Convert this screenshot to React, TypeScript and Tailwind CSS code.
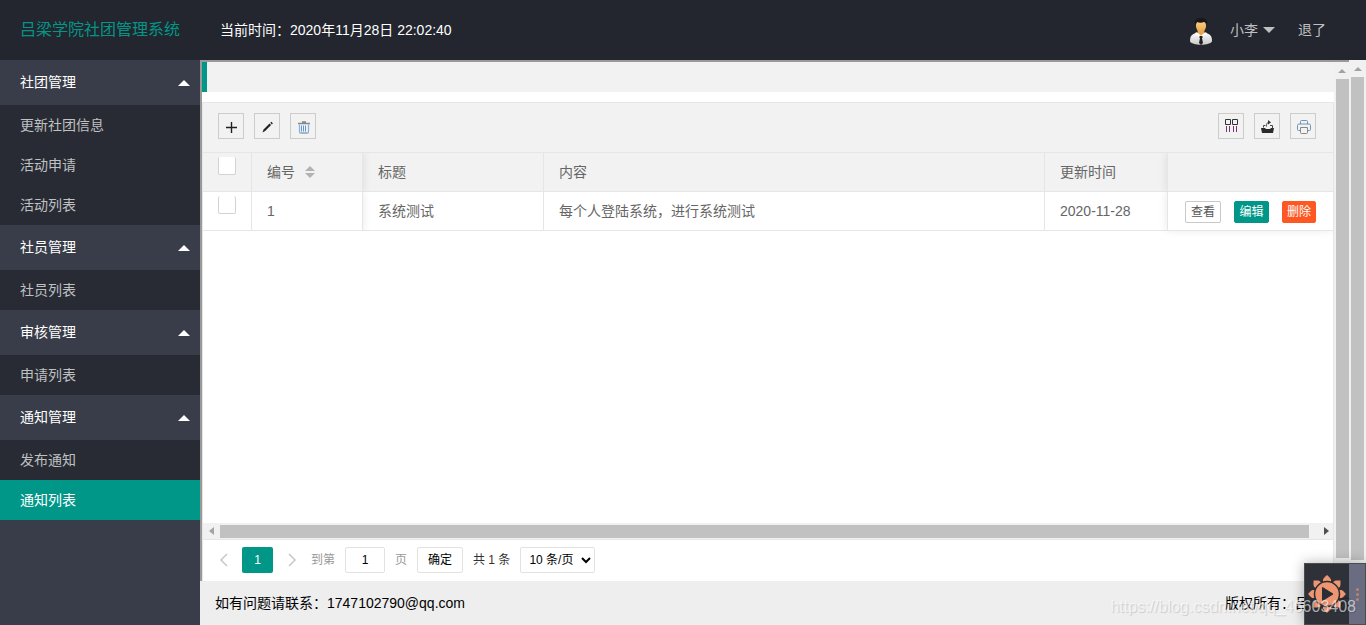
import { useState } from "react";

interface MenuGroup {
  title: string;
  items: string[];
}

interface Notice {
  id: number;
  title: string;
  content: string;
  updated: string;
}

const menus: MenuGroup[] = [
  { title: "社团管理", items: ["更新社团信息", "活动申请", "活动列表"] },
  { title: "社员管理", items: ["社员列表"] },
  { title: "审核管理", items: ["申请列表"] },
  { title: "通知管理", items: ["发布通知", "通知列表"] },
];

const notices: Notice[] = [
  {
    id: 1,
    title: "系统测试",
    content: "每个人登陆系统，进行系统测试",
    updated: "2020-11-28",
  },
];

const toolButton =
  "flex h-[26px] w-[26px] items-center justify-center border border-[#ccc] text-[#333]";
const smallButton = "h-[22px] rounded-xs border px-1 text-xs leading-5";

const Avatar = () => (
  <svg width="24" height="28" viewBox="0 0 24 28" aria-hidden="true">
    <defs>
      <linearGradient id="shirt" x1="0" y1="0" x2="0" y2="1">
        <stop offset="0" stopColor="#fff" />
        <stop offset="1" stopColor="#c9c9c9" />
      </linearGradient>
      <linearGradient id="face" x1="0" y1="0" x2="0" y2="1">
        <stop offset="0" stopColor="#ffd590" />
        <stop offset="1" stopColor="#e8a546" />
      </linearGradient>
    </defs>
    <path d="M1 23c0-5 2-7 6-8l5-1 5 1c4 1 6 3 6 8-1 5-21 5-22 0z" fill="url(#shirt)" />
    <path d="M8 14l4-3 4 3-4 4z" fill="#e9a84c" />
    <path d="M7 14l5 4 5-4 1 2-4 3-2-1-2 1-4-3z" fill="#fff" />
    <path d="M11 18h2l1 1-1 1 1 5-2 2-2-2 1-5-1-1z" fill="#222" />
    <ellipse cx="12" cy="8" rx="5" ry="6.500" fill="url(#face)" />
    <path d="M6 6c-1-4 2-6 6-6s7 2 6 6c-1-1-2-2-3-2-2 1-5 1-7 0-1 0-1 1-2 2z" fill="#1a1714" />
  </svg>
);

const Sidebar = () => {
  const [active, setActive] = useState("通知列表");

  return (
    <nav className="w-[200px] shrink-0 overflow-hidden bg-[#393d49] text-sm">
      {menus.map((group) => (
        <div key={group.title}>
          <button className="flex h-[45px] w-full items-center justify-between pr-[10px] pb-0.5 pl-5 text-white">
            {group.title}
            <span className="mt-0.5 border-x-6 border-b-6 border-x-transparent border-b-white"></span>
          </button>
          <ul className="bg-[#282b33]">
            {group.items.map((item) => (
              <li key={item}>
                <a
                  href="#"
                  onClick={() => setActive(item)}
                  className={`block h-10 pl-5 leading-10 ${
                    item === active ? "bg-[#009688] text-white" : "text-[#bfc0c2]"
                  }`}
                >
                  {item}
                </a>
              </li>
            ))}
          </ul>
        </div>
      ))}
    </nav>
  );
};

const Toolbar = () => (
  <div className="flex h-[49px] items-center justify-between bg-[#f2f2f2] pr-[17px] pb-[3px] pl-[15px]">
    <div className="flex gap-[10px]">
      <button className={toolButton} aria-label="添加">
        <svg width="14" height="14" viewBox="0 0 14 14" className="mt-1 ml-0.5">
          <path d="M6.5 1v11M1 6.500h11" stroke="#222" strokeWidth="1.400" />
        </svg>
      </button>
      <button className={toolButton} aria-label="编辑">
        <svg width="14" height="14" viewBox="0 0 14 14" className="mt-1 ml-0.5">
          <path d="M1.500 11.500l1-3 6-6 1.600 1.600-6 6zM9.300 1.800l1-1 1.600 1.500-1 1.100z" fill="#222" />
        </svg>
      </button>
      <button className={toolButton} aria-label="删除">
        <svg width="14" height="14" viewBox="0 0 14 14" fill="none" className="mt-1 ml-0.5">
          <path d="M1 2.500h12M5 1h4" stroke="#888" strokeWidth="1.400" />
          <path d="M2.500 3.500v7.500q0 1 1 1h7q1 0 1-1V3.500" stroke="#7fb2e0" strokeWidth="1.200" />
          <path d="M4.500 4.500v6M6.500 4.500v6M8.500 4.500v6" stroke="#5a9bd5" />
          <path d="M3.500 12h7" stroke="#999" />
        </svg>
      </button>
    </div>
    <div className="flex gap-[10px]">
      <button className={toolButton} aria-label="筛选列">
        <svg width="14" height="14" viewBox="0 0 14 14" fill="none" className="ml-0.5">
          <path d="M.5.500h5v5h-5zM7.500.500h5v5h-5z" stroke="#333" />
          <path d="M1.500 7v6M4.500 7v6M8.500 7v6M11.500 7v6" stroke="#75356f" />
        </svg>
      </button>
      <button className={toolButton} aria-label="导出">
        <svg width="14" height="14" viewBox="0 0 14 14" className="mt-0.5 ml-0.5">
          <path d="M0 8h4l1 1h4l1-1h3l-1 5H1z" fill="#2b2b2b" />
          <path d="M2.500 7.500V5.500h2M9 5.500h2.500v3M5.500 6.500c0-2.500 0-4 3-4" stroke="#444" fill="none" />
          <path d="M7 0l3 2.500L7 4.500z" fill="#333" />
        </svg>
      </button>
      <button className={toolButton} aria-label="打印">
        <svg width="14" height="14" viewBox="0 0 14 14" fill="none" className="mt-0.5 ml-0.5" stroke="#6f93b5">
          <path d="M3.500 4V1.500q0-1 1-1h5q1 0 1 1V4M3 10.500H1.500Q.5 10.500.5 9.500V5.500Q.5 4 2 4h10q1.500 0 1.500 1.500v4q0 1-1 1H11" />
          <path d="M3.500 7.500h7v5q0 1-1 1h-5q-1 0-1-1z" stroke="#888" />
        </svg>
      </button>
    </div>
  </div>
);

const NoticeTable = () => {
  const th = "h-[39px] border-b border-[#e6e6e6] px-[15px] text-left font-normal";
  const leftFixed = "border-r shadow-[1px_0_8px_rgba(0,0,0,0.08)] [clip-path:inset(0_-10px_0_0)]";

  return (
    <table className="w-full table-fixed border-separate border-spacing-0 text-sm text-[#666]">
      <colgroup>
        <col className="w-[49px]" />
        <col className="w-[111px]" />
        <col className="w-[181px]" />
        <col />
        <col className="w-[122px]" />
        <col className="w-[166px]" />
      </colgroup>
      <thead className="bg-[#f2f2f2]">
        <tr>
          <th className={`${th} border-r align-top`}>
            <input
              type="checkbox"
              aria-label="全选"
              className="mt-1 block h-[18px] w-[18px] appearance-none rounded-xs border border-t-0 border-[#d2d2d2] bg-white"
            />
          </th>
          <th className={`${th} ${leftFixed}`}>
            <div className="flex items-center gap-[10px]">
              编号
              <span className="flex flex-col gap-0.5">
                <i className="border-x-5 border-b-5 border-x-transparent border-b-[#b2b2b2]"></i>
                <i className="border-x-5 border-t-5 border-x-transparent border-t-[#b2b2b2]"></i>
              </span>
            </div>
          </th>
          <th className={`${th} border-r`}>标题</th>
          <th className={`${th} border-r`}>内容</th>
          <th className={th}>更新时间</th>
          <th
            className={`${th} border-l bg-[#f2f2f2] shadow-[-1px_0_8px_rgba(0,0,0,0.08)] [clip-path:inset(0_0_0_-10px)]`}
            aria-label="操作"
          ></th>
        </tr>
      </thead>
      <tbody>
        {notices.map((notice) => (
          <tr key={notice.id}>
            <td className={`${th} border-r align-top`}>
              <input
                type="checkbox"
                aria-label={notice.title}
                className="mt-1 block h-[18px] w-[18px] appearance-none rounded-xs border border-t-0 border-[#d2d2d2] bg-white"
              />
            </td>
            <td className={`${th} ${leftFixed}`}>{notice.id}</td>
            <td className={`${th} border-r`}>{notice.title}</td>
            <td className={`${th} border-r`}>{notice.content}</td>
            <td className={th}>{notice.updated}</td>
            <td className="border-b border-l border-[#e6e6e6] bg-white px-[17px] shadow-[-1px_0_8px_rgba(0,0,0,0.08)] [clip-path:inset(0_0_-10px_-10px)]">
              <div className="mt-0.5 flex justify-between">
                <button className={`${smallButton} w-9 border-[#c9c9c9] bg-white text-[#555]`}>查看</button>
                <button className={`${smallButton} border-[#009688] bg-[#009688] text-white`}>编辑</button>
                <button className={`${smallButton} border-[#ff5722] bg-[#ff5722] text-white`}>删除</button>
              </div>
            </td>
          </tr>
        ))}
      </tbody>
    </table>
  );
};

const Pagination = () => (
  <div className="flex h-[41px] shrink-0 items-center pb-0.5 pl-[15px] text-xs text-[#999]">
    <button aria-label="上一页">
      <svg width="12" height="14" viewBox="0 0 12 14" fill="none" stroke="#c8c8c8" strokeWidth="1.500">
        <path d="M9 1L3 7l6 6" />
      </svg>
    </button>
    <button className="ml-3 h-[26px] w-[31px] rounded-xs bg-[#009688] text-white">1</button>
    <button aria-label="下一页" className="ml-3">
      <svg width="12" height="14" viewBox="0 0 12 14" fill="none" stroke="#c8c8c8" strokeWidth="1.500">
        <path d="M4 1l6 6-6 6" />
      </svg>
    </button>
    <label className="ml-[14px] flex items-center gap-[10px]">
      到第
      <input
        type="text"
        defaultValue="1"
        className="h-[26px] w-10 rounded-xs border border-[#e2e2e2] bg-white text-center text-black"
      />
      页
    </label>
    <button className="ml-[10px] h-[26px] w-[46px] rounded-xs border border-[#e2e2e2] bg-white text-black">
      确定
    </button>
    <span className="ml-[10px] text-[#333]">共 1 条</span>
    <select
      aria-label="每页条数"
      className="ml-[10px] h-[26px] w-[75px] rounded-xs border border-[#e2e2e2] bg-white pl-1 text-black"
    >
      <option>10 条/页</option>
      <option>20 条/页</option>
      <option>30 条/页</option>
    </select>
  </div>
);

// Recorder badge that floats over the bottom right corner
const Recorder = () => (
  <div className="absolute right-0 bottom-0 flex h-[62px] w-[62px] border border-[#4a4d4c] shadow-[0_0_12px_rgba(0,0,0,0.3)]">
    <div className="flex flex-1 items-center justify-center bg-[#24262d]/95">
      <svg width="38" height="38" viewBox="0 0 38 38" aria-hidden="true">
        {[0, 45, 90, 135, 180, 225, 270, 315].map((angle) => (
          <path
            key={angle}
            d="M15 8V4.500c1-2 2.500-3 4-4.500 1.500 1.500 3 2.500 4 4.500V8z"
            fill="#ee9572"
            transform={`rotate(${angle} 19 19)`}
          />
        ))}
        <circle cx="19" cy="19" r="12.500" fill="#ee9572" stroke="#2b2d35" strokeWidth="1.500" />
        <path d="M14.500 12.500v13l10.500-6.500z" fill="#2b2d35" stroke="#2b2d35" strokeLinejoin="round" />
      </svg>
    </div>
    <div className="flex w-4 flex-col items-center justify-center gap-0.5 bg-[#62657a]/95">
      <i className="h-[3px] w-[3px] rounded-full bg-[#b98570]"></i>
      <i className="h-[3px] w-[3px] rounded-full bg-[#b98570]"></i>
      <i className="h-[3px] w-[3px] rounded-full bg-[#b98570]"></i>
    </div>
  </div>
);

const App = () => {
  return (
    <div className="relative flex h-screen flex-col overflow-hidden bg-white font-['Liberation_Sans','Noto_Sans_CJK_SC',sans-serif]">
      <header className="flex h-[60px] shrink-0 items-center bg-[#23262e] pr-10 pl-5 text-sm">
        <h1 className="w-[200px] text-base text-[#009688]">吕梁学院社团管理系统</h1>
        <p className="text-white">当前时间：2020年11月28日 22:02:40</p>
        <div className="ml-auto flex items-center text-[#bfc0c2]">
          <span className="mt-1">
            <Avatar />
          </span>
          <button className="ml-[17px] flex items-center gap-[5px]">
            小李
            <span className="border-x-6 border-t-6 border-x-transparent border-t-[#bfc0c2]"></span>
          </button>
          <a href="#" className="ml-[23px]">
            退了
          </a>
        </div>
      </header>

      <div className="flex min-h-0 flex-1">
        <Sidebar />
        <div className="flex min-w-0 flex-1 flex-col">
          <div className="flex min-h-0 flex-1">
            <main className="flex min-w-0 flex-1 border-t-2 border-l-2 border-[#999]">
              <div className="flex min-w-0 flex-1 flex-col">
                <div className="h-[30px] shrink-0 border-l-5 border-[#009688] bg-[#f2f2f2]"></div>
                <div className="mt-[10px] flex min-h-0 flex-1 flex-col border-t border-r border-l border-[#e6e6e6]">
                  <Toolbar />
                  <div className="min-h-0 flex-1 border-t border-[#e6e6e6]">
                    <NoticeTable />
                  </div>
                  <div className="flex h-[17px] shrink-0 items-center justify-between border-b border-[#e6e6e6] bg-[#f1f1f1] pr-1 pl-1.5">
                    <i className="border-y-4 border-r-5 border-y-transparent border-r-[#a3a3a3]"></i>
                    <div className="mr-[15px] ml-1.5 h-[13px] flex-1 bg-[#c1c1c1]"></div>
                    <i className="border-y-4 border-l-5 border-y-transparent border-l-[#505050]"></i>
                  </div>
                  <Pagination />
                </div>
              </div>
              <div className="flex w-[15px] flex-col items-end bg-[#f1f1f1] pb-[23px]">
                <i className="mt-[7px] mr-[3px] mb-1.5 border-x-4 border-b-4 border-x-transparent border-b-[#a3a3a3]"></i>
                <div className="w-[13px] flex-1 bg-[#c1c1c1]"></div>
              </div>
            </main>
            <div className="flex w-[17px] flex-col items-center bg-[#f1f1f1] pb-[21px]">
              <i className="mt-[7px] mb-1.5 border-x-4 border-b-4 border-x-transparent border-b-[#a3a3a3]"></i>
              <div className="w-[13px] flex-1 bg-[#c1c1c1]"></div>
            </div>
          </div>
          <footer className="flex h-11 shrink-0 items-center justify-between bg-[#eee] pr-[15px] pl-[15px] text-sm text-black">
            <p>如有问题请联系：1747102790@qq.com</p>
            <p>版权所有：吕梁学院</p>
          </footer>
        </div>
      </div>

      <Recorder />
      <p className="absolute right-[10px] bottom-1.5 text-base text-white/60 [text-shadow:1px_1px_1px_rgba(0,0,0,0.15)]">
        https://blog.csdn.net/qq_46603408
      </p>
    </div>
  );
};

export default App;
